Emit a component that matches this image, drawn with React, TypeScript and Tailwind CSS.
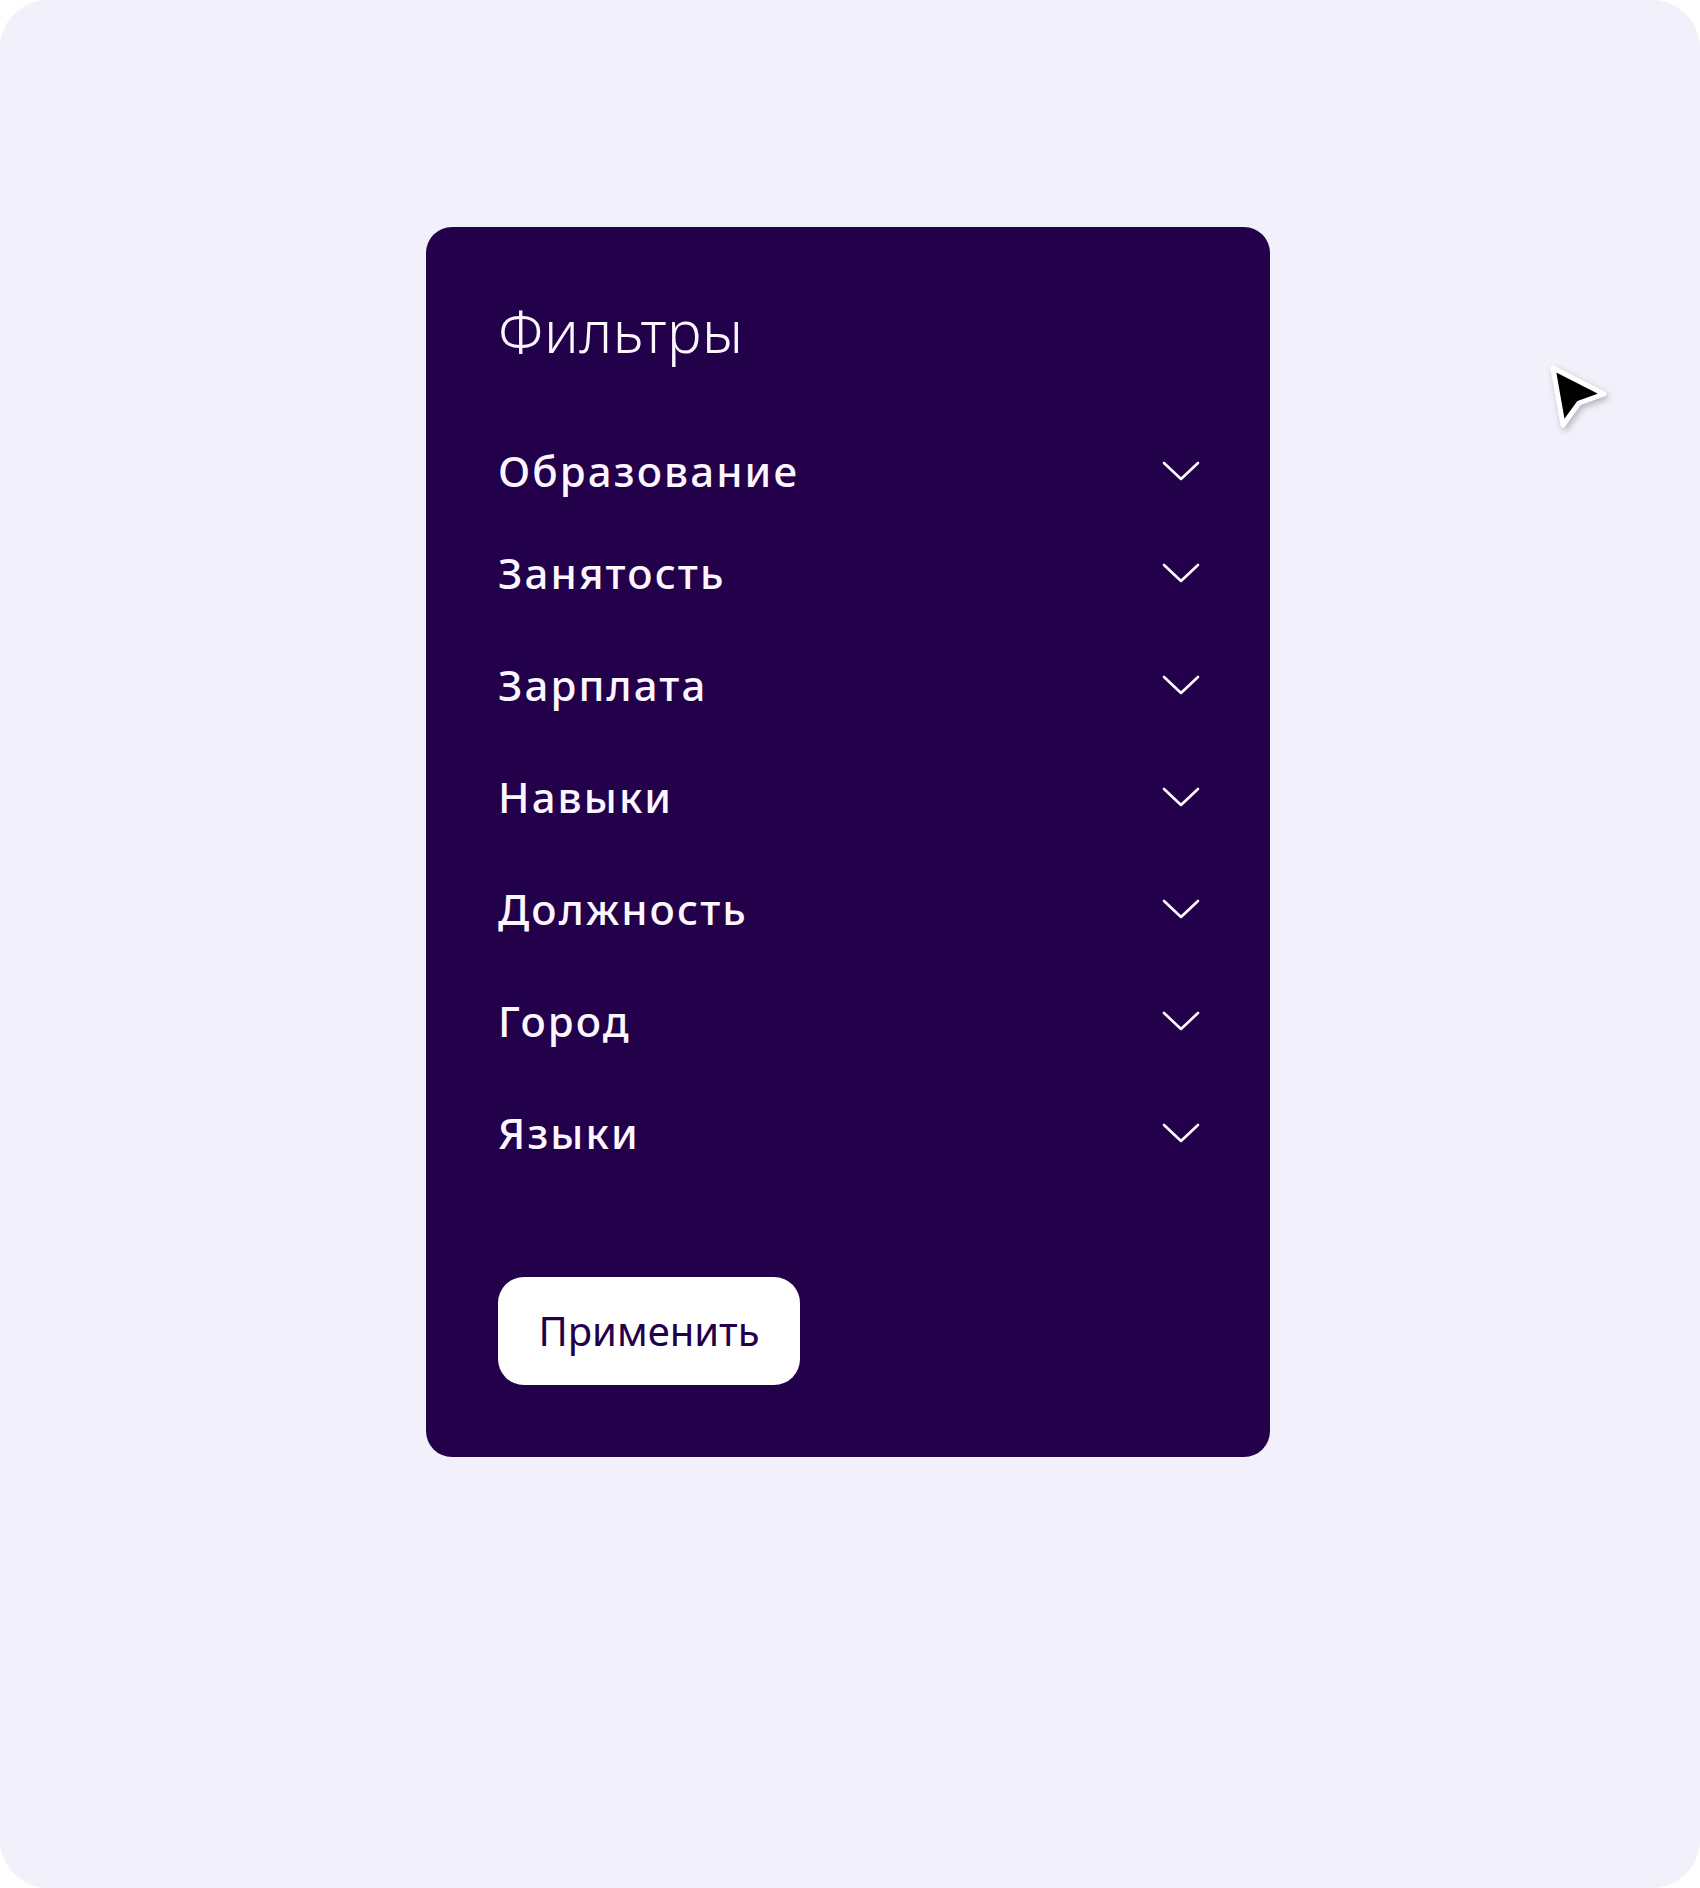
import { useState } from 'react'

const filters = ['Образование', 'Занятость', 'Зарплата', 'Навыки', 'Должность', 'Город', 'Языки']

function Chevron() {
  return (
    <svg width="38" height="22" viewBox="0 0 38 22" fill="none">
      <path d="M2 3 L19 19 L36 3" stroke="#ffffff" strokeWidth="2.6" strokeLinecap="round" strokeLinejoin="round" />
    </svg>
  )
}

function Cursor() {
  return (
    <svg
      className="absolute left-[1545px] top-[358px] drop-shadow-[2px_3px_3px_rgba(0,0,0,0.25)]"
      width="72"
      height="82"
      viewBox="0 0 72 82"
    >
      <polygon
        points="8,10 59,36 34,45 18,67"
        fill="#000000"
        stroke="#ffffff"
        strokeWidth="5"
        strokeLinejoin="round"
      />
    </svg>
  )
}

export default function App() {
  const [open, setOpen] = useState<string | null>(null)

  return (
    <div className="h-[1888px] w-[1700px] bg-white font-['Noto_Sans',sans-serif]">
      <div className="relative h-full w-full rounded-[48px] bg-[#f2f0fa] pt-[227px]">
        {/* Панель фильтров */}
        <div className="ml-[426px] w-[844px] rounded-[26px] bg-[#22004a] px-[72px] pt-[75px] pb-[72px]">
          <h1 className="text-[58px] leading-none font-light tracking-[0.01em] text-[#fbf6ff]">Фильтры</h1>

          <div className="mt-[83px] flex flex-col gap-[56px]">
            {filters.map((name, i) => (
              <button
                key={name}
                onClick={() => setOpen(open === name ? null : name)}
                className={`flex h-[56px] items-center justify-between text-left ${i === 0 ? 'mb-[-10px]' : ''}`}
              >
                <span className="text-[42px] leading-none font-medium tracking-[0.05em] text-[#fbf6ff]">{name}</span>
                <span className="mr-[-2px]">
                  <Chevron />
                </span>
              </button>
            ))}
          </div>

          <button className="mt-[116px] flex h-[108px] w-[302px] items-center justify-center rounded-[26px] bg-white text-[40px] leading-none text-[#22004a]">
            Применить
          </button>
        </div>

        <Cursor />
      </div>
    </div>
  )
}
